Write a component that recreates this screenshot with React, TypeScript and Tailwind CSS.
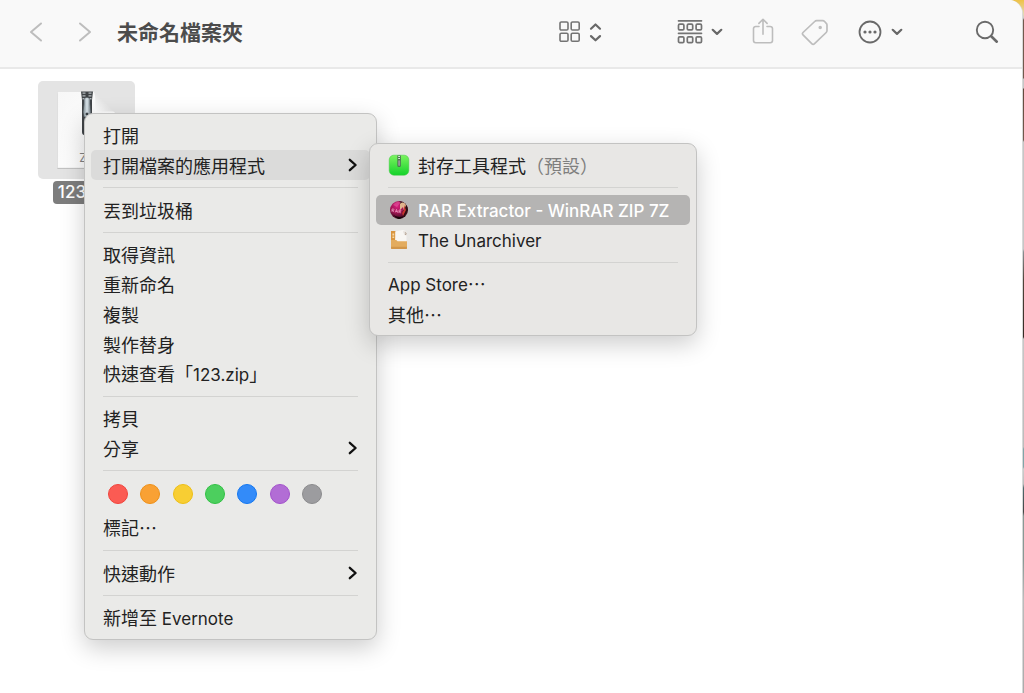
import React from "react";

const CJK = "font-['Noto_Sans_CJK_TC',sans-serif]";
const LATIN = "font-['Inter','Noto_Sans_CJK_TC',sans-serif]";

function Label({ text }: { text: string }) {
  const parts = text.split(/([\x20-\x7e]+)/).filter(Boolean);
  return (
    <span className="whitespace-pre">
      {parts.map((part, i) =>
        /^[\x20-\x7e]+$/.test(part) ? (
          <span key={i} className={`${LATIN} text-[17px]`}>
            {part}
          </span>
        ) : (
          <span key={i}>{part}</span>
        ),
      )}
    </span>
  );
}

const gaps = {
  tight: "mt-[7px] mb-[6px]",
  normal: "mt-[7px] mb-[7px]",
  roomy: "mt-[8px] mb-[7px]",
};

function Separator({ gap = "tight" }: { gap?: keyof typeof gaps }) {
  return <div role="separator" className={`mx-3 h-px shrink-0 bg-[#d3d3d1] ${gaps[gap]}`} />;
}

function Arrow() {
  return (
    <svg width="10" height="14" viewBox="0 0 10 14" fill="none" aria-hidden="true">
      <path d="M1.8 1.8 7.6 7l-5.8 5.2" stroke="#111" strokeWidth="2.3" strokeLinecap="round" strokeLinejoin="round" />
    </svg>
  );
}

function MenuItem({
  text,
  arrow = false,
  icon,
  note,
  state = "plain",
}: {
  text: string;
  arrow?: boolean;
  icon?: React.ReactNode;
  note?: string;
  state?: "plain" | "open" | "active";
}) {
  const look =
    state === "open"
      ? "bg-[#dbdbda] text-[#222]"
      : state === "active"
        ? "bg-[#b5b4b3] font-medium text-white"
        : "text-[#222]";
  return (
    <button
      type="button"
      role="menuitem"
      className={`flex h-[30px] w-full items-center rounded-[5px] px-3 text-left text-[18px] leading-[30px] ${look}`}
    >
      {icon && <span className="mr-2 flex w-[22px] shrink-0 justify-center">{icon}</span>}
      <Label text={text} />
      {note && <span className="text-[#7f7f7e]">{note}</span>}
      {arrow && (
        <span className="ml-auto">
          <Arrow />
        </span>
      )}
    </button>
  );
}

function ArchiveIcon() {
  return (
    <svg width="22" height="22" viewBox="0 0 22 22" aria-hidden="true">
      <defs>
        <linearGradient id="ag" x1="0" y1="0" x2="0" y2="1">
          <stop offset="0" stopColor="#7cf35f" />
          <stop offset="1" stopColor="#14d22b" />
        </linearGradient>
      </defs>
      <rect x="1.2" y="1.2" width="19.6" height="20" rx="4.6" fill="url(#ag)" stroke="#3cc93e" strokeWidth=".5" />
      <path d="M9.3 1.4h3.6v10a1.5 1.5 0 0 1-1.5 1.6h-.6a1.5 1.5 0 0 1-1.5-1.6z" fill="#4d7750" />
      <path d="M11.1 2v4" stroke="#d8e8d6" strokeWidth="1.8" strokeDasharray="1 1" />
      <rect x="10.2" y="6.3" width="1.9" height="5.6" rx=".8" fill="#9a8f9c" />
    </svg>
  );
}

function RarIcon() {
  return (
    <svg width="20" height="20" viewBox="0 0 20 20" aria-hidden="true">
      <defs>
        <radialGradient id="rg" cx=".4" cy=".3" r=".75">
          <stop offset="0" stopColor="#d61f7c" />
          <stop offset=".5" stopColor="#9c1552" />
          <stop offset="1" stopColor="#260713" />
        </radialGradient>
        <clipPath id="rc">
          <circle cx="10" cy="10" r="9" />
        </clipPath>
      </defs>
      <circle cx="10" cy="10" r="9" fill="url(#rg)" />
      <g clipPath="url(#rc)">
        <path d="M10 0c5 0 9 4 9 10l-4 7-2-4 3-6-4-1z" fill="#2a1110" />
        <path d="M11 4c2-2 5-2 6 1l-2 6-1-4-3 3z" fill="#e0b48c" />
        <path d="M15 5l2 5-3 6-1-3 2-3z" fill="#c93333" />
        <path d="M4 5c2-3 5-4 8-3L8 7z" fill="#ed5ba7" opacity=".55" />
        <path d="M3 14c4 3 8 4 12 2l-5 4z" fill="#160509" />
        <path
          d="M3 11.8V9h1.200c1.200 0 1.200 1.500 0 1.500h-.8l1.500 1.400M6.300 12.400l1.200-3 1.200 3.300M6.900 11.500h1.400M10 13v-3h.9c1.300 0 1.300 1.600 0 1.600h-.6l1.600 1.500"
          fill="none"
          stroke="#f3a7c8"
          strokeWidth=".7"
        />
      </g>
    </svg>
  );
}

function UnarchiverIcon() {
  return (
    <svg width="20" height="22" viewBox="0 0 20 22" aria-hidden="true">
      <path d="M2 2h4.5l1 2v8H2z" fill="#d9953f" />
      <path d="M3.4 4.4h1.8v2H3.4zM3.4 7.6h1.8v1.4H3.4z" fill="#f7d9a8" />
      <path d="M6.200 8V2.500L13.800 1l3.700 1.200V13H6z" fill="#f8f6f3" />
      <path d="M14 2.200l3.600.4v3.900l-2.200-.4z" fill="#e4dfda" />
      <path d="M16.100 3.600l1.200 1.100-1 1.100" fill="none" stroke="#9b8069" strokeWidth=".8" />
      <path d="M2 11h5.200l1.400 1.300H18v6.400c0 .8-.4 1.300-1.200 1.300H3.200c-.8 0-1.200-.5-1.200-1.300z" fill="#e3ac5f" />
      <path d="M2 17.800h16v.9c0 .8-.4 1.300-1.200 1.300H3.200c-.8 0-1.200-.5-1.200-1.300z" fill="#d2964a" />
    </svg>
  );
}

function ZipDocument() {
  return (
    <svg width="60" height="80" viewBox="0 0 60 80" aria-hidden="true">
      <defs>
        <linearGradient id="paper" x1="0" y1="0" x2="1" y2="1">
          <stop offset="0" stopColor="#f7f7f7" />
          <stop offset="1" stopColor="#fff" />
        </linearGradient>
        <linearGradient id="fold" x1="0" y1="1" x2="1" y2="0">
          <stop offset="0" stopColor="#fff" />
          <stop offset=".6" stopColor="#dedede" />
        </linearGradient>
        <linearGradient id="pull" x1="0" y1="0" x2="1" y2="0">
          <stop offset="0" stopColor="#79858b" />
          <stop offset=".5" stopColor="#dbe6ec" />
          <stop offset="1" stopColor="#6d787e" />
        </linearGradient>
      </defs>
      <path d="M.5 3.500h36L58 24v55H.5z" fill="#aaa" opacity=".7" />
      <path d="M.5 1.500h36.500l21 21v55.500H.5z" fill="url(#paper)" stroke="#dadada" strokeWidth=".5" />
      <path d="M37 1.500c2 6 1 14 1 20h20z" fill="url(#fold)" />
      <path d="M24 1.500h12l-1 8.500v32c0 2-1 3-2 3h-6c-1 0-2-1-2-3V10z" fill="#3f4346" />
      <path d="M27 2.500v8M33 2.500v8" stroke="#b4babd" strokeWidth="3" strokeDasharray="1.300 1.500" />
      <path d="M27 9c1-2 5-2 6 0v5l1 8-1 5h-6l-1-5 1-8z" fill="url(#pull)" stroke="#4b5357" strokeWidth=".6" />
      <circle cx="30" cy="24" r="1.500" fill="#394044" />
      <path d="M27.500 28h5v12h-5z" fill="#5f676b" />
      <text x="31.500" y="72" textAnchor="middle" fontFamily="Inter" fontSize="12" fill="#828282">
        ZIP
      </text>
    </svg>
  );
}

const stroke = {
  fill: "none",
  strokeLinecap: "round" as const,
  strokeLinejoin: "round" as const,
};

function SmallChevron() {
  return (
    <svg width="12" height="8" viewBox="0 0 12 8" {...stroke} stroke="#686868" strokeWidth="2.2" aria-hidden="true">
      <path d="M1.700 1.800 6 5.900l4.300-4.100" />
    </svg>
  );
}

function ToolbarButton({ label, className = "", children }: { label: string; className?: string; children: React.ReactNode }) {
  return (
    <button type="button" aria-label={label} className={`flex h-8 shrink-0 items-center ${className}`}>
      {children}
    </button>
  );
}

function Toolbar() {
  return (
    <header className="flex h-[69px] items-center border-b-2 border-[#e9e9e9] bg-[#f9f9f9] pl-[29px] pr-[23px] pb-[3px]">
      <ToolbarButton label="返回">
        <svg width="14" height="22" viewBox="0 0 14 22" {...stroke} stroke="#bdbdbd" strokeWidth="2" aria-hidden="true">
          <path d="M12 2.500 2 11l10 8.500" />
        </svg>
      </ToolbarButton>
      <ToolbarButton label="往前" className="ml-[35px]">
        <svg width="14" height="22" viewBox="0 0 14 22" {...stroke} stroke="#bdbdbd" strokeWidth="2" aria-hidden="true">
          <path d="M2 2.500 12 11 2 19.500" />
        </svg>
      </ToolbarButton>
      <h1 className="ml-[25px] whitespace-nowrap pb-[2px] text-[21px] font-bold leading-8 text-[#4c4c4c]">未命名檔案夾</h1>
      <div className="ml-auto flex items-center">
        <ToolbarButton label="顯示方式" className="gap-[8px]">
          <svg width="22" height="22" viewBox="0 0 22 22" {...stroke} stroke="#747474" strokeWidth="1.600" aria-hidden="true">
            <rect x="1" y="1" width="8" height="8" rx="1.300" />
            <rect x="12.200" y="1" width="8" height="8" rx="1.300" />
            <rect x="1" y="12.200" width="8" height="8" rx="1.300" />
            <rect x="12.200" y="12.200" width="8" height="8" rx="1.300" />
          </svg>
          <svg width="13" height="20" viewBox="0 0 13 20" {...stroke} stroke="#686868" strokeWidth="2.200" aria-hidden="true">
            <path d="M2 6.700 6.500 2.500 11 6.700M2 14.100l4.500 4.200 4.500-4.200" />
          </svg>
        </ToolbarButton>
        <ToolbarButton label="群組" className="ml-[75px] gap-2">
          <svg width="26" height="26" viewBox="0 0 26 26" {...stroke} stroke="#747474" strokeWidth="1.700" aria-hidden="true">
            <path d="M1.500 1.800h23M1.500 14.300h23" />
            <rect x="1.500" y="5.200" width="5.400" height="5.700" rx="1.200" />
            <rect x="10.300" y="5.200" width="5.400" height="5.700" rx="1.200" />
            <rect x="19.100" y="5.200" width="5.400" height="5.700" rx="1.200" />
            <rect x="1.500" y="17.900" width="5.400" height="5.700" rx="1.200" />
            <rect x="10.300" y="17.900" width="5.400" height="5.700" rx="1.200" />
            <rect x="19.100" y="17.900" width="5.400" height="5.700" rx="1.200" />
          </svg>
          <SmallChevron />
        </ToolbarButton>
        <ToolbarButton label="分享" className="ml-[28px]">
          <svg width="24" height="28" viewBox="0 0 24 28" {...stroke} stroke="#bdbdbd" strokeWidth="1.600" aria-hidden="true">
            <path d="M8 8.500H4.700A2.200 2.200 0 0 0 2.500 10.700v11.800a2.200 2.200 0 0 0 2.200 2.200h14.600a2.200 2.200 0 0 0 2.200-2.200V10.700a2.200 2.200 0 0 0-2.200-2.200H16M12 16.200V1.500M7.900 5.400 12 1.300l4.100 4.100" />
          </svg>
        </ToolbarButton>
        <ToolbarButton label="標記" className="ml-[26px]">
          <svg width="28" height="28" viewBox="0 0 28 28" {...stroke} stroke="#bdbdbd" strokeWidth="1.700" aria-hidden="true">
            <path d="M15.600 2.700h6.200c.8 0 1.300.3 1.800.8l1.700 1.900c.5.500.7 1 .7 1.700v5.500c0 .8-.3 1.400-.8 1.900L13.300 25.900c-.7.700-1.600.7-2.300 0L2 16.800c-.7-.7-.7-1.600 0-2.300L13.700 3.500c.5-.500 1.100-.8 1.900-.8z" />
            <circle cx="19.200" cy="9.400" r=".9" fill="#bdbdbd" />
          </svg>
        </ToolbarButton>
        <ToolbarButton label="更多動作" className="ml-[29px] gap-[9px]">
          <svg width="24" height="24" viewBox="0 0 24 24" {...stroke} stroke="#6a6a6a" strokeWidth="1.800" aria-hidden="true">
            <circle cx="12" cy="12" r="10.500" />
            <g fill="#6a6a6a" stroke="none">
              <circle cx="7" cy="12" r="1.600" />
              <circle cx="12" cy="12" r="1.600" />
              <circle cx="17" cy="12" r="1.600" />
            </g>
          </svg>
          <SmallChevron />
        </ToolbarButton>
        <ToolbarButton label="搜尋" className="ml-[72px]">
          <svg width="24" height="24" viewBox="0 0 24 24" {...stroke} stroke="#6a6a6a" aria-hidden="true">
            <circle cx="10" cy="10" r="8.200" strokeWidth="1.900" />
            <path d="m16.200 16.200 5.600 5.500" strokeWidth="2.600" />
          </svg>
        </ToolbarButton>
      </div>
    </header>
  );
}

const tags = [
  { name: "紅色", look: "bg-[#fb5b53] border-[#f0443c]" },
  { name: "橙色", look: "bg-[#f9a134] border-[#ee9017]" },
  { name: "黃色", look: "bg-[#f8ce33] border-[#edbf16]" },
  { name: "綠色", look: "bg-[#4ccf5e] border-[#31c144]" },
  { name: "藍色", look: "bg-[#338bf9] border-[#1477f0]" },
  { name: "紫色", look: "bg-[#b26dd5] border-[#a352cb]" },
  { name: "灰色", look: "bg-[#9c9c9f] border-[#8b8b8d]" },
];

const panel = "absolute rounded-[9px] border border-[#c3c3c2] p-[6px] shadow-[0_8px_24px_rgba(0,0,0,0.2)]";

function ContextMenu() {
  return (
    <div role="menu" className={`${panel} left-[84px] top-[113px] w-[293px] bg-[#eaeae8]`}>
      <MenuItem text="打開" />
      <MenuItem text="打開檔案的應用程式" arrow state="open" />
      <Separator gap="normal" />
      <MenuItem text="丟到垃圾桶" />
      <Separator />
      <MenuItem text="取得資訊" />
      <MenuItem text="重新命名" />
      <MenuItem text="複製" />
      <MenuItem text="製作替身" />
      <MenuItem text="快速查看「123.zip」" />
      <Separator />
      <MenuItem text="拷貝" />
      <MenuItem text="分享" arrow />
      <Separator gap="normal" />
      <div className="mb-[2px] ml-[17px] flex h-8 w-[214px] items-center justify-between">
        {tags.map((tag) => (
          <button key={tag.name} type="button" aria-label={tag.name} className={`size-5 rounded-full border ${tag.look}`} />
        ))}
      </div>
      <MenuItem text="標記…" />
      <Separator gap="roomy" />
      <MenuItem text="快速動作" arrow />
      <Separator gap="normal" />
      <MenuItem text="新增至 Evernote" />
    </div>
  );
}

function OpenWithMenu() {
  return (
    <div role="menu" className={`${panel} left-[369px] top-[143px] w-[328px] bg-[#e8e7e5]`}>
      <MenuItem icon={<ArchiveIcon />} text="封存工具程式" note="（預設）" />
      <Separator gap="normal" />
      <MenuItem icon={<RarIcon />} text="RAR Extractor - WinRAR ZIP 7Z" state="active" />
      <MenuItem icon={<UnarchiverIcon />} text="The Unarchiver" />
      <Separator />
      <MenuItem text="App Store…" />
      <MenuItem text="其他…" />
    </div>
  );
}

export default function App() {
  return (
    <div
      lang="zh-Hant"
      className={`${CJK} relative min-h-screen bg-[linear-gradient(180deg,#eec246_0px,#e5d8b0_14px,#cccccc_18px,#72594d_20px,#72594d_78px,#c6c6c6_79px,#c6c6c6_88px,#63493d_89px,#72594d_140px,#c6c6c6_142px,#c6c6c6_249px,#8a8f92_252px,#51443a_280px,#352a24_337px,#c6c6c6_339px,#bbbbbb_447px,#81a5a8_449px,#81a5a8_467px,#cccccc_469px,#bbbbbb_484px,#4f6b6e_488px,#444444_512px,#899995_516px,#899995_560px,#bbbbbb_600px,#aaaaaa_693px)] pr-px`}
    >
      <div className="flex min-h-screen flex-col overflow-hidden rounded-tr-[14px] border-r border-[#d8d8d8] bg-white">
        <Toolbar />
        <main className="flex-1 px-[38px] pt-3">
          <figure className="flex w-[97px] flex-col items-center">
            <div className="flex h-[98px] w-full items-center justify-center rounded-[5px] bg-[#e4e4e4]">
              <ZipDocument />
            </div>
            <figcaption
              className={`${LATIN} mt-[2px] h-[23px] rounded-[4px] bg-[#7d7d7d] px-[5px] text-[17px] font-medium leading-[23px] text-white`}
            >
              123.zip
            </figcaption>
          </figure>
        </main>
      </div>
      <ContextMenu />
      <OpenWithMenu />
    </div>
  );
}
